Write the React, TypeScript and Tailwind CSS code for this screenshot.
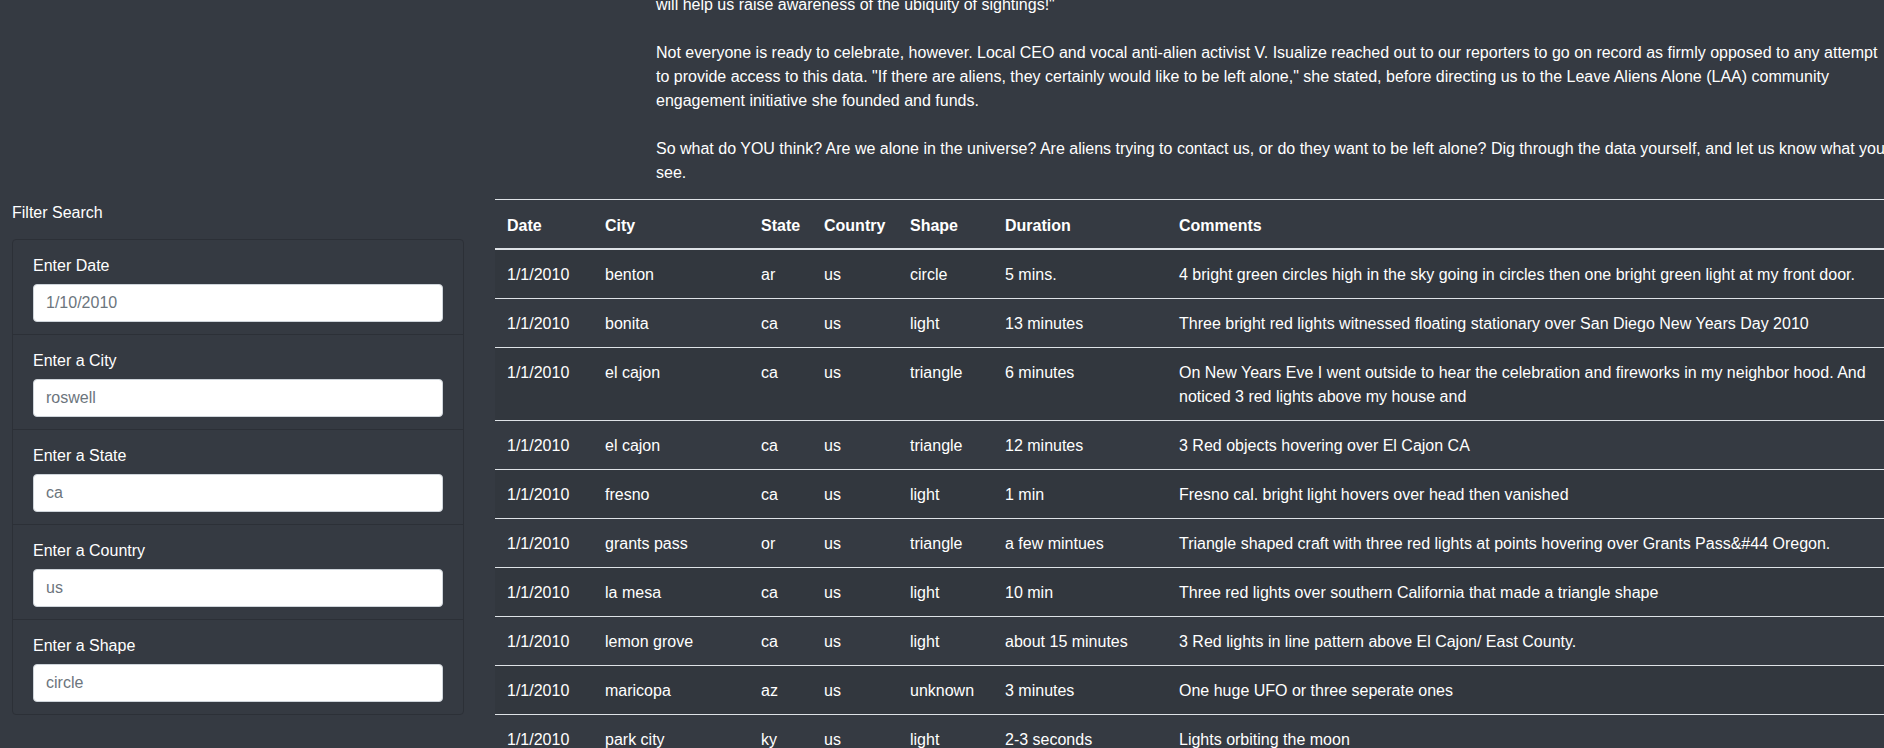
const sightings = [
  { date: '1/1/2010', city: 'benton', state: 'ar', country: 'us', shape: 'circle', duration: '5 mins.', comments: '4 bright green circles high in the sky going in circles then one bright green light at my front door.' },
  { date: '1/1/2010', city: 'bonita', state: 'ca', country: 'us', shape: 'light', duration: '13 minutes', comments: 'Three bright red lights witnessed floating stationary over San Diego New Years Day 2010' },
  { date: '1/1/2010', city: 'el cajon', state: 'ca', country: 'us', shape: 'triangle', duration: '6 minutes', comments: 'On New Years Eve I went outside to hear the celebration and fireworks in my neighbor hood. And noticed 3 red lights above my house and' },
  { date: '1/1/2010', city: 'el cajon', state: 'ca', country: 'us', shape: 'triangle', duration: '12 minutes', comments: '3 Red objects hovering over El Cajon CA' },
  { date: '1/1/2010', city: 'fresno', state: 'ca', country: 'us', shape: 'light', duration: '1 min', comments: 'Fresno cal. bright light hovers over head then vanished' },
  { date: '1/1/2010', city: 'grants pass', state: 'or', country: 'us', shape: 'triangle', duration: 'a few mintues', comments: 'Triangle shaped craft with three red lights at points hovering over Grants Pass&#44 Oregon.' },
  { date: '1/1/2010', city: 'la mesa', state: 'ca', country: 'us', shape: 'light', duration: '10 min', comments: 'Three red lights over southern California that made a triangle shape' },
  { date: '1/1/2010', city: 'lemon grove', state: 'ca', country: 'us', shape: 'light', duration: 'about 15 minutes', comments: '3 Red lights in line pattern above El Cajon/ East County.' },
  { date: '1/1/2010', city: 'maricopa', state: 'az', country: 'us', shape: 'unknown', duration: '3 minutes', comments: 'One huge UFO or three seperate ones' },
  { date: '1/1/2010', city: 'park city', state: 'ky', country: 'us', shape: 'light', duration: '2-3 seconds', comments: 'Lights orbiting the moon' },
]

const filters = [
  { id: 'datetime', label: 'Enter Date', placeholder: '1/10/2010' },
  { id: 'city', label: 'Enter a City', placeholder: 'roswell' },
  { id: 'state', label: 'Enter a State', placeholder: 'ca' },
  { id: 'country', label: 'Enter a Country', placeholder: 'us' },
  { id: 'shape', label: 'Enter a Shape', placeholder: 'circle' },
]

const headers = ['Date', 'City', 'State', 'Country', 'Shape', 'Duration', 'Comments']
const colWidths = ['w-[98px]', 'w-[156px]', 'w-[63px]', 'w-[86px]', 'w-[95px]', 'w-[174px]', 'w-[729px]']

const App = () => {
  return (
    <div className="w-[1884px] h-[748px] overflow-hidden bg-[#353a42] text-white text-base leading-6 font-['Liberation_Sans',Arial,sans-serif]">
      {/* Article text (scrolled, top line cut off) */}
      <div className="ml-[656px] w-[1230px] -mt-[7px]">
        <p className="mb-6">will help us raise awareness of the ubiquity of sightings!"</p>
        <p className="mb-6">
          Not everyone is ready to celebrate, however. Local CEO and vocal anti-alien activist V. Isualize reached out to our
          reporters to go on record as firmly opposed to any attempt to provide access to this data. "If there are aliens, they
          certainly would like to be left alone," she stated, before directing us to the Leave Aliens Alone (LAA) community
          engagement initiative she founded and funds.
        </p>
        <p className="mb-[14px]">
          So what do YOU think? Are we alone in the universe? Are aliens trying to contact us, or do they want to be left alone?
          Dig through the data yourself, and let us know what you see.
        </p>
      </div>

      <div className="flex items-start w-[1896px]">
        {/* Filters */}
        <aside className="ml-3 w-[452px] shrink-0">
          <p className="pt-[2px] mb-[14px]">Filter Search</p>
          <ul className="border border-[#2c3037] rounded">
            {filters.map((f, i) => (
              <li key={f.id} className={`px-5 py-3 ${i < filters.length - 1 ? 'border-b border-[#2c3037]' : ''}`}>
                <label htmlFor={f.id} className="block pt-0.5 mb-1.5">{f.label}</label>
                <input
                  id={f.id}
                  type="text"
                  placeholder={f.placeholder}
                  className="block w-full h-[38px] px-3 bg-white text-[#495057] placeholder:text-[#6c757d] border border-[#ced4da] rounded"
                />
              </li>
            ))}
          </ul>
        </aside>

        {/* Results table */}
        <table className="ml-[31px] w-[1401px] table-fixed shrink-0">
          <colgroup>
            {colWidths.map(w => <col key={w} className={w} />)}
          </colgroup>
          <thead>
            <tr>
              {headers.map(h => (
                <th key={h} className="px-3 pt-[14px] pb-[10px] text-left font-bold whitespace-nowrap border-t border-b-2 border-[#dee2e6]">{h}</th>
              ))}
            </tr>
          </thead>
          <tbody>
            {sightings.map((s, i) => (
              <tr key={i} className={i % 2 === 0 ? 'bg-black/5' : ''}>
                <td className="px-3 pt-[13px] pb-[11px] align-top whitespace-nowrap border-t border-[#dee2e6]">{s.date}</td>
                <td className="px-3 pt-[13px] pb-[11px] align-top whitespace-nowrap border-t border-[#dee2e6]">{s.city}</td>
                <td className="px-3 pt-[13px] pb-[11px] align-top whitespace-nowrap border-t border-[#dee2e6]">{s.state}</td>
                <td className="px-3 pt-[13px] pb-[11px] align-top whitespace-nowrap border-t border-[#dee2e6]">{s.country}</td>
                <td className="px-3 pt-[13px] pb-[11px] align-top whitespace-nowrap border-t border-[#dee2e6]">{s.shape}</td>
                <td className="px-3 pt-[13px] pb-[11px] align-top whitespace-nowrap border-t border-[#dee2e6]">{s.duration}</td>
                <td className="px-3 pt-[13px] pb-[11px] align-top border-t border-[#dee2e6]">{s.comments}</td>
              </tr>
            ))}
          </tbody>
        </table>
      </div>
    </div>
  )
}

export default App
